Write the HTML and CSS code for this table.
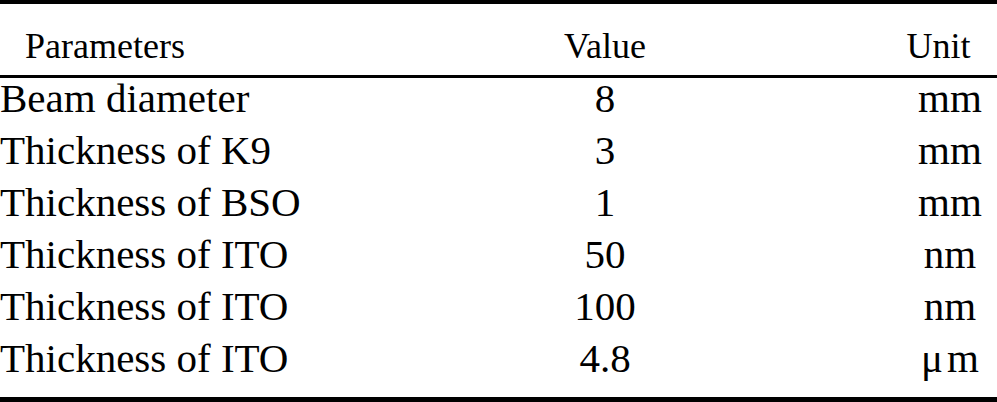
FILE: index.html
```html
<!DOCTYPE html>
<html lang="en">
<head>
    <meta charset="UTF-8">
    <meta name="viewport" content="width=device-width, initial-scale=1.0">
    <title>Simulation Parameters</title>
    <link rel="stylesheet" href="styles.css">
</head>
<body>

    <!-- Parameters table -->
    <table class="params">
        <thead>
            <tr>
                <th class="col-name">Parameters</th>
                <th class="col-value">Value</th>
                <th class="col-unit">Unit</th>
            </tr>
        </thead>
        <tbody>
            <tr>
                <td class="name">Beam diameter</td>
                <td class="value">8</td>
                <td class="unit">mm</td>
            </tr>
            <tr>
                <td class="name">Thickness of K9</td>
                <td class="value">3</td>
                <td class="unit">mm</td>
            </tr>
            <tr>
                <td class="name">Thickness of BSO</td>
                <td class="value">1</td>
                <td class="unit">mm</td>
            </tr>
            <tr>
                <td class="name">Thickness of ITO</td>
                <td class="value">50</td>
                <td class="unit">nm</td>
            </tr>
            <tr>
                <td class="name">Thickness of ITO</td>
                <td class="value">100</td>
                <td class="unit">nm</td>
            </tr>
            <tr class="last">
                <td class="name">Thickness of ITO</td>
                <td class="value">4.8</td>
                <td class="unit"><span class="mu">μ</span>m</td>
            </tr>
        </tbody>
    </table>

</body>
</html>
```

FILE: styles.css
```css
body {
    margin: 0;
    background-color: white;
    color: black;
    font-family: "Liberation Serif", "Times New Roman", serif;
}

.params {
    width: 997px;
    border-collapse: separate;
    border-spacing: 0;
    table-layout: fixed;
}

/* header row */
.params th {
    font-size: 36px;
    font-weight: normal;
    line-height: 40px;
    padding: 22px 0 9px 0;
    border-top: 4px solid black;
    border-bottom: 3px solid black;
    white-space: nowrap;
}

.params th.col-name {
    width: 305px;
    text-align: left;
    padding-left: 25px;
}

.col-value {
    width: 550px;
    text-align: center;
}

.col-unit {
    width: 117px;
    text-align: center;
}

/* body rows */
.params td {
    font-size: 41px;
    line-height: 40px;
    padding: 0 0 12px 0;
    white-space: nowrap;
}

.name {
    text-align: left;
}

.value {
    text-align: center;
}

.params td.unit {
    text-align: center;
    padding-left: 23px;
}

.mu {
    margin-right: 4px;
}

.params .last td {
    padding-bottom: 19px;
    border-bottom: 5px solid black;
}
```
